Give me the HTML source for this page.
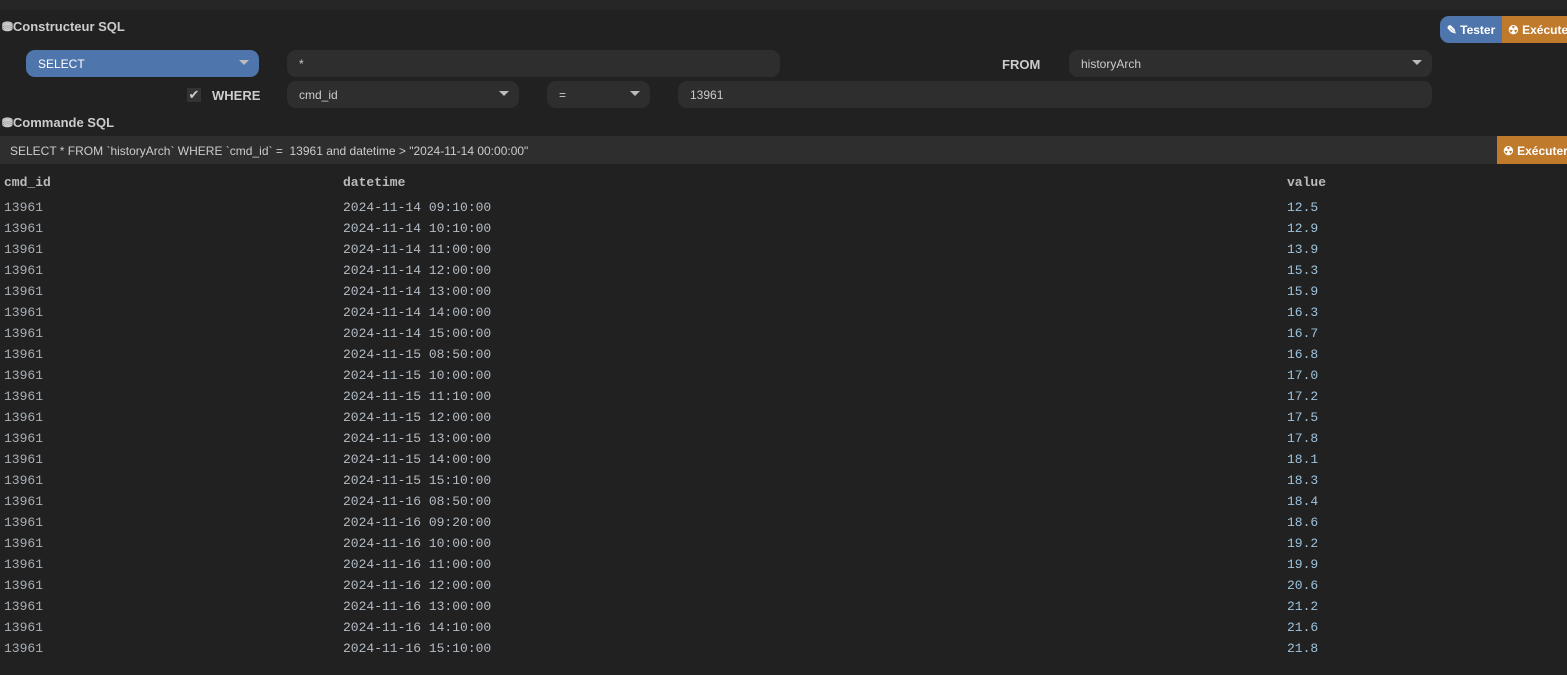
<!DOCTYPE html>
<html><head><meta charset="utf-8"><style>
body{margin:0;width:1567px;height:675px;background:#212121;font-family:"Liberation Sans",sans-serif;color:#ddd;position:relative;overflow:hidden}
.a{position:absolute}
.top{left:0;top:0;width:1567px;height:10px;background:#262626}
.h{font-weight:bold;font-size:13px;color:#ccc}
.inp{background:#2e2e2e;border-radius:9px;height:27px;font-size:12px;color:#ccc;line-height:29px;box-sizing:border-box;padding-left:12px}
.caret{position:absolute;right:10px;top:10px;width:0;height:0;border-left:5px solid transparent;border-right:5px solid transparent;border-top:5px solid #bbb}
.mono{font-family:"Liberation Mono",monospace;font-size:13px}
.row{position:absolute;left:0;width:1567px;height:21px;line-height:21px}
.row span{position:absolute}
</style></head><body>
<div class="a top"></div>
<div class="a h" style="left:2px;top:19px">&#9923;Constructeur SQL</div>
<div class="a" style="left:1440px;top:16px;width:62px;height:27px;background:#4f76ac;border-radius:9px 0 0 9px;font-size:12px;font-weight:bold;color:#fff;line-height:29px;text-align:center">✎ Tester</div>
<div class="a" style="left:1502px;top:16px;width:70px;height:27px;background:#c07a2c;font-size:12px;font-weight:bold;color:#fff;line-height:29px;padding-left:6px">☢ Exécuter</div>
<div class="a inp" style="left:26px;top:50px;width:233px;background:#4f76ac;color:#fff">SELECT<div class="caret"></div></div>
<div class="a inp" style="left:287px;top:50px;width:493px">*</div>
<div class="a h" style="left:1002px;top:57px;font-size:13px">FROM</div>
<div class="a inp" style="left:1069px;top:50px;width:363px">historyArch<div class="caret"></div></div>
<div class="a" style="left:187px;top:88px;width:14px;height:14px;background:#333;color:#ccc;font-size:13px;line-height:14px;text-align:center">✔</div>
<div class="a h" style="left:212px;top:88px">WHERE</div>
<div class="a inp" style="left:287px;top:81px;width:232px">cmd_id<div class="caret"></div></div>
<div class="a inp" style="left:547px;top:81px;width:103px">=<div class="caret"></div></div>
<div class="a inp" style="left:678px;top:81px;width:754px">13961</div>
<div class="a h" style="left:2px;top:115px">&#9923;Commande SQL</div>
<div class="a" style="left:0;top:136px;width:1567px;height:28px;background:#2e2e2e;font-size:12px;color:#ccc;line-height:30px;padding-left:10px;box-sizing:border-box">SELECT * FROM `historyArch` WHERE `cmd_id` =&nbsp; 13961 and datetime &gt; "2024-11-14 00:00:00"</div>
<div class="a" style="left:1497px;top:136px;width:75px;height:28px;background:#c07a2c;font-size:12px;font-weight:bold;color:#fff;line-height:30px;padding-left:6px">☢ Exécuter</div>
<div class="row mono" style="top:172px;font-weight:bold;color:#bbb"><span style="left:4px">cmd_id</span><span style="left:343px">datetime</span><span style="left:1287px">value</span></div>
<div class="mono" id="r"></div>
<script>
var d=[["2024-11-14 09:10:00","12.5"],["2024-11-14 10:10:00","12.9"],["2024-11-14 11:00:00","13.9"],["2024-11-14 12:00:00","15.3"],["2024-11-14 13:00:00","15.9"],["2024-11-14 14:00:00","16.3"],["2024-11-14 15:00:00","16.7"],["2024-11-15 08:50:00","16.8"],["2024-11-15 10:00:00","17.0"],["2024-11-15 11:10:00","17.2"],["2024-11-15 12:00:00","17.5"],["2024-11-15 13:00:00","17.8"],["2024-11-15 14:00:00","18.1"],["2024-11-15 15:10:00","18.3"],["2024-11-16 08:50:00","18.4"],["2024-11-16 09:20:00","18.6"],["2024-11-16 10:00:00","19.2"],["2024-11-16 11:00:00","19.9"],["2024-11-16 12:00:00","20.6"],["2024-11-16 13:00:00","21.2"],["2024-11-16 14:10:00","21.6"],["2024-11-16 15:10:00","21.8"]];
var h="";d.forEach(function(x,i){h+='<div class="row" style="top:'+(197+i*21)+'px"><span style="left:4px;color:#a9b0b6">13961</span><span style="left:343px;color:#b4bcc4">'+x[0]+'</span><span style="left:1287px;color:#9ec3dc">'+x[1]+'</span></div>';});
document.getElementById("r").innerHTML=h;
</script>
</body></html>
